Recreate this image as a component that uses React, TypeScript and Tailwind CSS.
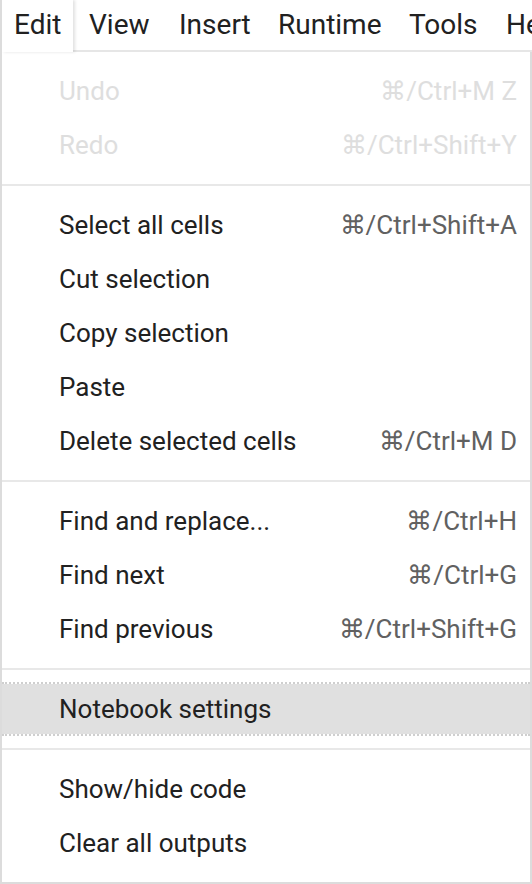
import React from "react";

type Item = { label: string; shortcut?: string; disabled?: boolean; active?: boolean };

const groups: Item[][] = [
  [
    { label: "Undo", shortcut: "⌘/Ctrl+M Z", disabled: true },
    { label: "Redo", shortcut: "⌘/Ctrl+Shift+Y", disabled: true },
  ],
  [
    { label: "Select all cells", shortcut: "⌘/Ctrl+Shift+A" },
    { label: "Cut selection" },
    { label: "Copy selection" },
    { label: "Paste" },
    { label: "Delete selected cells", shortcut: "⌘/Ctrl+M D" },
  ],
  [
    { label: "Find and replace...", shortcut: "⌘/Ctrl+H" },
    { label: "Find next", shortcut: "⌘/Ctrl+G" },
    { label: "Find previous", shortcut: "⌘/Ctrl+Shift+G" },
  ],
  [{ label: "Notebook settings", active: true }],
  [{ label: "Show/hide code" }, { label: "Clear all outputs" }],
];

function Row({ item }: { item: Item }) {
  const base = "flex items-center justify-between pl-[57px] pr-[13px] text-[26px] whitespace-nowrap";
  if (item.active) {
    return (
      <div className={`${base} h-[54px] bg-[#e0e0e0] bg-clip-padding border-y-2 border-dotted border-[#cfcfcf] text-[#212121]`}>
        <span>{item.label}</span>
        {item.shortcut && <span className="text-[#616161]">{item.shortcut}</span>}
      </div>
    );
  }
  return (
    <div className={`${base} h-[54px] ${item.disabled ? "text-[#dedede]" : "text-[#212121]"}`}>
      <span>{item.label}</span>
      {item.shortcut && (
        <span className={item.disabled ? "text-[#dedede]" : "text-[#616161]"}>{item.shortcut}</span>
      )}
    </div>
  );
}

export default function App() {
  return (
    <div
      className="w-[532px] h-[884px] bg-white overflow-hidden flex flex-col border-l-2 border-[#dcdcdc]"
      style={{ fontFamily: "Roboto, 'Noto Sans', sans-serif" }}
    >
      <div className="flex h-[52px] shrink-0">
        <div className="relative z-10 w-[71px] h-[52px] bg-white pl-[12px] pt-[4px] text-[28px] text-[#212121] shadow-[2px_0_3px_rgba(0,0,0,0.12)]">
          Edit
        </div>
        <div className="flex-1 flex h-[52px] border-b-2 border-[#e6e6e6] pt-[4px] pl-[16px] text-[28px] text-[#212121] whitespace-nowrap overflow-hidden">
          <span className="w-[90px] shrink-0">View</span>
          <span className="w-[99px] shrink-0">Insert</span>
          <span className="w-[131px] shrink-0">Runtime</span>
          <span className="w-[97px] shrink-0">Tools</span>
          <span className="shrink-0">Help</span>
        </div>
      </div>
      <div className="flex-1 flex flex-col border-r-2 border-b-2 border-[#dcdcdc] pt-[12px] pb-[12px]">
        {groups.map((g, gi) => (
          <React.Fragment key={gi}>
            {gi > 0 && <div className="my-[12px] h-[2px] bg-[#e8e8e8]" />}
            {g.map((it) => (
              <Row key={it.label} item={it} />
            ))}
          </React.Fragment>
        ))}
      </div>
    </div>
  );
}
